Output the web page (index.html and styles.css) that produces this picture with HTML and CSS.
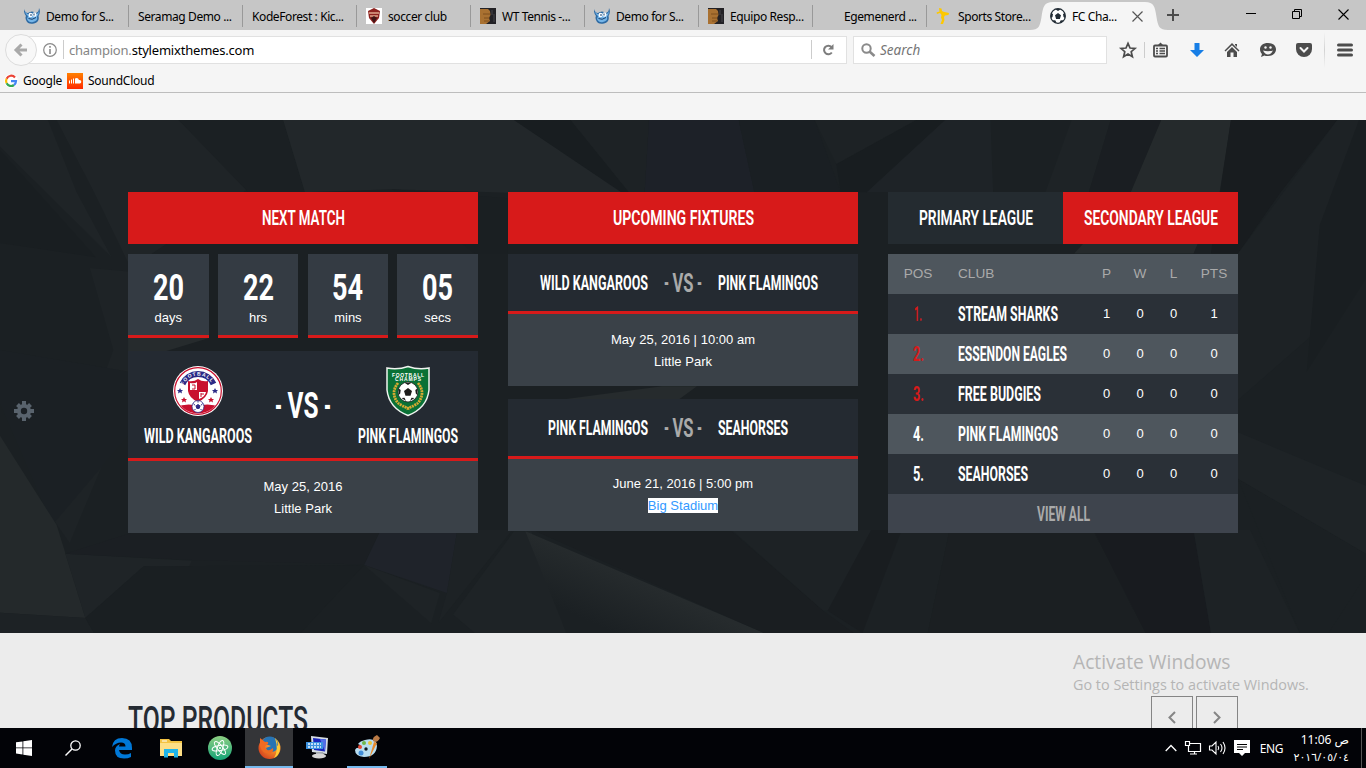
FILE: index.html
```html
<!DOCTYPE html>
<html lang="en">
<head>
<meta charset="utf-8">
<title>FC Champion</title>
<link rel="stylesheet" href="styles.css">
</head>
<body>
<svg class="defs" width="0" height="0">
  <defs>
    <symbol id="imp" viewBox="0 0 16 16"><path d="M0 1Q1 5 4 5Q8 2 12 5Q15 4 15 0Q17 4 14.500 8Q16 14 10 15.500Q4 17 2 12Q1 9 2 8Q-.5 5 0 1Z" fill="#2d6aa3"/><path d="M1 3Q2 6 4.500 6.500Q8 4 12 6.500Q14.500 5 15 3Q15 6 13 8.500Q14 13 9 14Q5 15 3 11L4 8Q1 6 1 3Z" fill="#75b5e8"/><ellipse cx="6.500" cy="7" rx="2" ry="2.200" fill="#fff"/><ellipse cx="10.500" cy="6.500" rx="2" ry="2.200" fill="#fff"/><path d="M7 6v2M10 5.500v2M4.500 10.500Q8 12.500 12 9.500" stroke="#173d68" fill="none"/></symbol>
    <symbol id="face" viewBox="0 0 16 16"><path fill="#222125" d="M0 0h16v16H0z"/><path fill="#a97131" d="M0 1h8l2 2 .5 4L9 10l1 3-4 3H0z"/><path d="M3 6h7M4 10h6M4 13h5" stroke="#744819" stroke-width=".8"/><path d="M12 2v5M14 6v8" stroke="#45454a"/></symbol>
    <symbol id="ball" viewBox="0 0 16 16"><circle cx="8" cy="8" r="7.300" fill="#fff" stroke="#222c35" stroke-width="1.300"/><path fill="#222c35" d="M8 5l3 2.200L9.900 11H6.100L5 7.200zM5 1h6L8 3zM1 5l2 1-.5 3L.8 10zM15 5l-2 1 .5 3 1.700 1zM3 12l2.500.5L6.500 15 4 14.500zM13 12l-2.500.5L9.500 15l2.500-.5z"/></symbol>
  </defs>
</svg>

<div class="tabs">
  <div class="tab"><svg width="16" height="16"><use href="#imp"/></svg><span>Demo for S...</span></div>
  <div class="tab"><span>Seramag Demo ...</span></div>
  <div class="tab"><span>KodeForest : Kic...</span></div>
  <div class="tab"><svg width="16" height="16"><path fill="#fff" d="M0 0h16v16H0z"/><path d="M2 3L8 0l6 3-1 7-5 6-5-6z" fill="#8d2320"/><path d="M3 5h10M4 8h8" stroke="#dea78a" stroke-width="1.500"/><path d="M5 10l3-2 3 2-3 5z" fill="#401515"/></svg><span>soccer club</span></div>
  <div class="tab"><svg width="16" height="16"><use href="#face"/></svg><span>WT Tennis -...</span></div>
  <div class="tab"><svg width="16" height="16"><use href="#imp"/></svg><span>Demo for S...</span></div>
  <div class="tab"><svg width="16" height="16"><use href="#face"/></svg><span>Equipo Resp...</span></div>
  <div class="tab"><svg width="16" height="16"></svg><span>Egemenerd ...</span></div>
  <div class="tab last"><svg width="16" height="16"><path d="M3 0l2.500.5L6 3l1.500.8L13 5l-.5 2-3.500.5L8 9l.5 3L7 16H4.500L6 12l-1-2.500L5.500 7 4 5 1 6 .5 4.500 3.500 3.500z" fill="#fdc800"/></svg><span>Sports Store...</span></div>
  <div class="tab active">
    <svg class="tab-shape" width="138" height="28"><path d="M0 28C9 28 10 24 11.500 15C13 5 14 0 23 0H115C124 0 125 5 126.500 15C128 24 129 28 138 28Z" fill="#f5f5f5"/></svg>
    <svg width="16" height="16"><use href="#ball"/></svg><span>FC Cha...</span>
    <svg class="tab-close" width="11" height="11"><path d="M.5 .5l10 10M10.500 .5l-10 10" stroke="#555" stroke-width="1.200"/></svg>
  </div>
  <svg class="newtab" width="12" height="12"><path d="M6 0v12M0 6h12" stroke="#4c4c4c" stroke-width="2"/></svg>
  <div class="winctl">
    <svg width="10" height="10"><path d="M0 4.500h10" stroke="#000"/></svg>
    <svg width="10" height="10"><path d="M.5 2.500h7v7h-7zM2.500 2.500v-2h7v7h-2" fill="none" stroke="#000"/></svg>
    <svg width="11" height="11"><path d="M.5 .5l10 10M10.500 .5l-10 10" stroke="#000" stroke-width="1.100"/></svg>
  </div>
</div>

<div class="nav">
  <div class="back"><svg width="14" height="14"><path d="M13 7H2M7.500 1.500L2 7l5.500 5.500" fill="none" stroke="#a9a9a9" stroke-width="3"/></svg></div>
  <div class="url">
    <svg width="14" height="14"><circle cx="7" cy="7" r="6.300" fill="none" stroke="#8a8a8a" stroke-width="1.200"/><path d="M7 3v1.800M7 6v5" stroke="#8a8a8a" stroke-width="1.600"/></svg>
    <i class="sep"></i>
    <span class="addr">champion.<b>stylemixthemes.com</b></span>
    <i class="sep right"></i>
    <svg width="12" height="12"><path d="M9.500 3A4.300 4.300 0 1 0 9.800 8.500" fill="none" stroke="#7d7d7d" stroke-width="2"/><path d="M11.500 0v5.500H6z" fill="#7d7d7d"/></svg>
  </div>
  <div class="search"><svg width="14" height="14"><circle cx="5.500" cy="5.500" r="4.200" fill="none" stroke="#8a8a8a" stroke-width="2"/><path d="M8.500 8.500l5 4.500" stroke="#8a8a8a" stroke-width="2.600"/></svg><span>Search</span></div>
  <div class="tools">
    <svg width="16" height="16"><path d="M8 1.300l2 4.700 5 .4-3.800 3.300 1.200 5L8 12l-4.400 2.700 1.200-5L1 6.400 6 6z" fill="none" stroke="#4c4c4c" stroke-width="1.700"/></svg>
    <i class="tool-sep"></i>
    <svg width="15" height="16"><rect x="1" y="3.500" width="13" height="11" rx="1" fill="none" stroke="#4c4c4c" stroke-width="1.800"/><path d="M4.500 3.500L7.500 .5l3 3z" fill="#4c4c4c"/><path d="M3 6.500h2M6.500 6.500H12M3 9h2M6.500 9H12M3 11.500h2M6.500 11.500H12" stroke="#4c4c4c" stroke-width="1.300"/></svg>
    <svg class="dl" width="14" height="16"><path d="M4.500 1h5v7H14l-7 7-7-7h4.500z" fill="#177ee6"/></svg>
    <svg width="16" height="16"><path d="M8 1l7.500 7.500-1 1L8 3.200 1.500 9.500l-1-1zM11 2h2v3l-2-2zM8 5l5 5v5h-3.500v-4.500h-3V15H3v-5z" fill="#4c4c4c"/></svg>
    <svg width="16" height="16"><path d="M8 1c5 0 8 2.500 8 6.300S13 14 8 14c-1.500 0-3-.3-3.500-.6L1 15l1-3C.7 11 0 9 0 7.300 0 3.500 3 1 8 1z" fill="#4c4c4c"/><circle cx="5.500" cy="5.500" r="1.200" fill="#f5f5f5"/><circle cx="10.500" cy="5.500" r="1.200" fill="#f5f5f5"/><path d="M3 8.500Q8 10 13 8.500Q11 12.500 8 12.500T3 8.500Z" fill="#f5f5f5"/></svg>
    <svg width="16" height="16"><path d="M2 1h12q2 0 2 2v4a8 8 0 0 1-16 0V3q0-2 2-2z" fill="#4c4c4c"/><path d="M4.500 6L8 9.500 11.500 6" fill="none" stroke="#f5f5f5" stroke-width="2" stroke-linecap="round"/></svg>
    <i class="menu-sep"></i>
    <svg width="16" height="14"><path d="M1.500 2h13M1.500 7h13M1.500 12h13" stroke="#4c4c4c" stroke-width="3" stroke-linecap="round"/></svg>
  </div>
</div>

<div class="bookmarks">
  <svg width="14" height="14" viewBox="0 0 14 14"><circle cx="7" cy="7" r="7" fill="#fff"/><g fill="none" stroke-width="2.200"><path d="M11 3.500A5 5 0 0 0 2.600 4.700" stroke="#ea4335"/><path d="M2.600 4.700A5 5 0 0 0 2.600 9.300" stroke="#fbbc05"/><path d="M2.600 9.300A5 5 0 0 0 10 11" stroke="#34a853"/><path d="M10 11A5 5 0 0 0 12 7.200H7" stroke="#4285f4"/></g></svg>
  <span>Google</span>
  <svg width="16" height="16"><defs><linearGradient id="sc" x2="0" y2="1"><stop stop-color="#ff8000"/><stop offset="1" stop-color="#ff2a00"/></linearGradient></defs><path fill="url(#sc)" d="M0 0h16v16H0z"/><path d="M2.500 7.500v3M4.500 6.500v4M6.500 5.500v5" stroke="#fff"/><path d="M8 10.500V5.500q3-1.500 4 1.500 2.300-.3 2.300 1.700T12.500 10.500z" fill="#fff"/></svg>
  <span>SoundCloud</span>
</div>

<main>
<section class="hero">
  <svg class="facets" viewBox="0 56 1568 1436" preserveAspectRatio="none">
    <defs><linearGradient id="ray" gradientUnits="userSpaceOnUse" x1="650" y1="1430" x2="740" y2="1350"><stop stop-color="#1b2023"/><stop offset="1" stop-color="#262b2d"/></linearGradient></defs>
    <path d="M0 56H55L88 258 128 440 0 130Z" fill="#1f2427"/>
    <path d="M0 140L110 440 0 400Z" fill="#191e21"/>
    <path d="M65 56H205L290 240 150 470 108 258Z" fill="#1f2427"/>
    <path d="M205 56H325L350 258H285Z" fill="#1b2023"/>
    <path d="M325 56H590L715 258 590 260 450 250 350 258Z" fill="#22272a"/>
    <path d="M450 250L583 275V430H545Z" fill="#1a1f22"/>
    <path d="M590 56H655L722 258H713Z" fill="#181d20"/>
    <path d="M655 56H745L740 258H722Z" fill="#1d2225"/>
    <path d="M745 56H848L866 258H740Z" fill="#1d2128"/>
    <path d="M848 56H935L965 258H866Z" fill="#1a1f23"/>
    <path d="M935 56H1052L960 180Z" fill="#1d2225"/>
    <path d="M1052 56H1085L995 258H965L960 180Z" fill="#181d20"/>
    <path d="M1085 56H1137L1140 258H995Z" fill="#1e2327"/>
    <path d="M1230 56H1275L1250 258H1200Z" fill="#1e2326"/>
    <path d="M1275 56H1333L1298 258H1250Z" fill="#1a1e22"/>
    <path d="M1333 56H1413L1400 258 1370 430H1233L1298 258Z" fill="#252a2c"/>
    <path d="M1413 56H1535L1470 258 1421 430H1390Z" fill="#181c1f"/>
    <path d="M1535 56H1568V200L1510 650 1421 840V430Z" fill="#1d2225"/>
    <path d="M1560 56L1568 56V500L1500 760 1515 350Z" fill="#191e21"/>
    <path d="M103 470L147 480V850L80 1240 60 1170 130 700Z" fill="#1e2326"/>
    <path d="M0 700L147 760V940L60 1190 0 850Z" fill="#1b2024"/>
    <path d="M0 940L65 1190 98 1450 0 1435Z" fill="#24292b"/>
    <path d="M0 1435L98 1450 108 1492H0Z" fill="#1d2225"/>
    <path d="M75 1270L220 1290 215 1318 165 1305 98 1450Z" fill="#1f2427"/>
    <path d="M75 1270L150 1212H435L418 1300 220 1288Z" fill="#1b1f23"/>
    <path d="M165 1305L418 1302 345 1492H108L98 1450Z" fill="#1a1f22"/>
    <path d="M437 1204H525L513 1380 418 1302Z" fill="#1f232a"/>
    <path d="M525 1204H588L503 1465 513 1380Z" fill="#1d2225"/>
    <path d="M418 1302L505 1380 495 1465Z" fill="#1e2326"/>
    <path d="M590 1207H610L650 1492H545L520 1440Z" fill="#1e2326"/>
    <path d="M603 1207L877 1492H650Z" fill="url(#ray)"/>
    <path d="M615 1207H840L945 1430 980 1492H877Z" fill="#1a1e21"/>
    <path d="M840 1204H1000L965 1430 945 1430Z" fill="#1d2225"/>
    <path d="M1000 1204H1035L990 1492 950 1430Z" fill="#191d20"/>
    <path d="M1035 1204H1090L1065 1492H990Z" fill="#1c2124"/>
    <path d="M1090 1204H1255L1315 1492H1065Z" fill="#1b1f22"/>
    <path d="M1255 1204H1370L1390 1492H1315Z" fill="#181b1f"/>
    <path d="M1370 1204H1435L1492 1492H1390Z" fill="#1d2225"/>
    <path d="M1421 1060L1568 1270V1330L1525 1492H1492Z" fill="#1b2023"/>
    <path d="M1421 930L1568 1080V1270L1421 1060Z" fill="#1e2326"/>
    <path d="M650 837L760 801H800L780 837ZM147 600L240 666 190 703H147Z" fill="#262b2d"/>
  </svg>
  <svg class="gear" width="20" height="20" viewBox="-10 -10 20 20"><g stroke="#59636d" stroke-width="4"><path d="M0-10V10M-10 0H10M-6.500-6.500L6.500 6.500M6.500-6.500L-6.500 6.500"/></g><circle r="7" fill="#59636d"/><circle r="3.200" fill="#1b2025"/></svg>

  <div class="columns">
    <div class="col">
      <h2 class="bar"><svg class="cond lg" width="83" height="22"><text y="18.200" textLength="83" lengthAdjust="spacingAndGlyphs">NEXT MATCH</text></svg></h2>
      <div class="countdown">
        <div><svg class="cond xl" width="31" height="34"><text y="30" textLength="31" lengthAdjust="spacingAndGlyphs">20</text></svg><span>days</span></div>
        <div><svg class="cond xl" width="31" height="34"><text y="30" textLength="31" lengthAdjust="spacingAndGlyphs">22</text></svg><span>hrs</span></div>
        <div><svg class="cond xl" width="31" height="34"><text y="30" textLength="31" lengthAdjust="spacingAndGlyphs">54</text></svg><span>mins</span></div>
        <div><svg class="cond xl" width="31" height="34"><text y="30" textLength="31" lengthAdjust="spacingAndGlyphs">05</text></svg><span>secs</span></div>
      </div>
      <div class="versus">
        <div class="team">
          <svg width="50" height="50" viewBox="0 0 50 50"><defs><clipPath id="rc"><circle cx="25" cy="25" r="22.500"/></clipPath><path id="arc" d="M10.500 19.500A15.500 15.500 0 0 1 39.500 19.500"/></defs><circle cx="25" cy="25" r="25" fill="#fff"/><circle cx="25" cy="25" r="23.300" fill="#fff" stroke="#c8102e" stroke-width="1.200"/><path clip-path="url(#rc)" d="M0 42Q14 36 25 40Q36 36 50 42V50H0Z" fill="#c8102e"/><path d="M9.500 18A17 17 0 0 1 40.500 18" fill="none" stroke="#2b2a86" stroke-width="6"/><text class="crest-label"><textPath href="#arc" textLength="34">FOOTBALL</textPath></text><path d="M15 15Q21 16 25 13Q29 16 35 15V25Q34 32 25 36Q16 32 15 25Z" fill="#c8102e"/><path d="M17 17q5 1 7-1v8h-7zM26 26h7q-1 5-7 7z" fill="#fff"/><path d="M19 19h3v4h-3M28 27v4M28 28h3" fill="none" stroke="#c8102e"/><path d="M7 22l1 2h2l-1.500 1.500.5 2L7 26.300 5 27.500l.5-2L4 24h2zM42 22l1 2h2l-1.500 1.500.5 2-2-1.200-2 1.200.5-2L39 24h2z" fill="#2b2a86"/><path d="M11 31l1 2h2l-1.500 1.500.5 2-2-1.200L9 36.500l.5-2L8 33h2zM38 31l1 2h2l-1.500 1.500.5 2-2-1.200-2 1.200.5-2L35 33h2z" fill="#c8102e"/><circle cx="25" cy="40.500" r="6" fill="#fff" stroke="#2b2a86" stroke-width=".8"/><path d="M25 38.500l2 1.500-.8 2.400h-2.400L23 40zM20.500 37.500l1.500 2M29.500 37.500l-1.500 2M25 35v1.500M21.500 44l1-1M28.500 44l-1-1" fill="#2b2a86" stroke="#2b2a86"/></svg>
          <svg class="cond md" width="108" height="20"><text y="17" textLength="108" lengthAdjust="spacingAndGlyphs">WILD KANGAROOS</text></svg>
        </div>
        <svg class="cond vs" width="56" height="34"><text y="30"><tspan x="0" textLength="7" lengthAdjust="spacingAndGlyphs">-</tspan><tspan x="12.500" textLength="31" lengthAdjust="spacingAndGlyphs">VS</tspan><tspan x="49" textLength="7" lengthAdjust="spacingAndGlyphs">-</tspan></text></svg>
        <div class="team">
          <svg width="44" height="50" viewBox="0 0 44 50"><path d="M1 2Q12 4 22 .5Q32 4 43 2Q43 10 43 24Q41 42 22 49.500Q3 42 1 24Q1 10 1 2Z" fill="#0a7136" stroke="#f0f4f0" stroke-width="1.500"/><text class="crest-label" x="6" y="10.500" textLength="32">FOOTBALL</text><text class="crest-label" x="9" y="15" textLength="26">CHAMPS</text><path d="M12 17Q4 27 12 37Q16 40 24 43M32 17Q40 27 32 37Q28 40 20 43" fill="none" stroke="#d8aa32" stroke-width="2.800" stroke-dasharray="2 .7"/><circle cx="22" cy="26" r="10" fill="#fff" stroke="#222" stroke-width=".8"/><path d="M22 22l4 3-1.500 4.700h-5L18 25zM18.500 16.700h7L22 19zM12.700 22.500l2 1.500-.5 3.500-1.500 1.500zM31.300 22.500l-2 1.500.5 3.500 1.500 1.500zM15.500 32l3-.2 1.500 3.200zM28.500 32l-3-.2-1.500 3.200z" fill="#1e1d1b"/></svg>
          <svg class="cond md" width="100" height="20"><text y="17" textLength="100" lengthAdjust="spacingAndGlyphs">PINK FLAMINGOS</text></svg>
        </div>
      </div>
      <p class="when low">May 25, 2016<br>Little Park</p>
    </div>

    <div class="col">
      <h2 class="bar"><svg class="cond lg" width="141" height="22"><text y="18.200" textLength="141" lengthAdjust="spacingAndGlyphs">UPCOMING FIXTURES</text></svg></h2>
      <div class="fixture">
        <svg class="cond md" width="108" height="20"><text y="16.500" textLength="108" lengthAdjust="spacingAndGlyphs">WILD KANGAROOS</text></svg>
        <svg class="cond svs" width="38" height="24"><text y="21"><tspan x="0" textLength="5" lengthAdjust="spacingAndGlyphs">-</tspan><tspan x="8.500" textLength="21" lengthAdjust="spacingAndGlyphs">VS</tspan><tspan x="33" textLength="5" lengthAdjust="spacingAndGlyphs">-</tspan></text></svg>
        <svg class="cond md" width="100" height="20"><text y="16.500" textLength="100" lengthAdjust="spacingAndGlyphs">PINK FLAMINGOS</text></svg>
      </div>
      <p class="when low">May 25, 2016 | 10:00 am<br>Little Park</p>
      <div class="fixture second">
        <svg class="cond md" width="100" height="20"><text y="16.500" textLength="100" lengthAdjust="spacingAndGlyphs">PINK FLAMINGOS</text></svg>
        <svg class="cond svs" width="38" height="24"><text y="20.500"><tspan x="0" textLength="5" lengthAdjust="spacingAndGlyphs">-</tspan><tspan x="8.500" textLength="21" lengthAdjust="spacingAndGlyphs">VS</tspan><tspan x="33" textLength="5" lengthAdjust="spacingAndGlyphs">-</tspan></text></svg>
        <svg class="cond md" width="70" height="20"><text y="16.500" textLength="70" lengthAdjust="spacingAndGlyphs">SEAHORSES</text></svg>
      </div>
      <p class="when">June 21, 2016 | 5:00 pm<br><mark>Big Stadium</mark></p>
    </div>

    <div class="col">
      <div class="leagues">
        <h2 class="bar dark"><svg class="cond lg" width="114" height="22"><text y="18.200" textLength="114" lengthAdjust="spacingAndGlyphs">PRIMARY LEAGUE</text></svg></h2>
        <h2 class="bar"><svg class="cond lg" width="134" height="22"><text y="18.200" textLength="134" lengthAdjust="spacingAndGlyphs">SECONDARY LEAGUE</text></svg></h2>
      </div>
      <div class="row head"><span>POS</span><span class="club">CLUB</span><span>P</span><span>W</span><span>L</span><span>PTS</span></div>
      <div class="row"><span class="red"><svg class="cond md" width="8" height="20"><text y="17" textLength="8" lengthAdjust="spacingAndGlyphs">1.</text></svg></span><span class="club"><svg class="cond md" width="100" height="20"><text y="17" textLength="100" lengthAdjust="spacingAndGlyphs">STREAM SHARKS</text></svg></span><span>1</span><span>0</span><span>0</span><span>1</span></div>
      <div class="row alt"><span class="red"><svg class="cond md" width="11" height="20"><text y="17" textLength="11" lengthAdjust="spacingAndGlyphs">2.</text></svg></span><span class="club"><svg class="cond md" width="109" height="20"><text y="17" textLength="109" lengthAdjust="spacingAndGlyphs">ESSENDON EAGLES</text></svg></span><span>0</span><span>0</span><span>0</span><span>0</span></div>
      <div class="row"><span class="red"><svg class="cond md" width="11" height="20"><text y="17" textLength="11" lengthAdjust="spacingAndGlyphs">3.</text></svg></span><span class="club"><svg class="cond md" width="83" height="20"><text y="17" textLength="83" lengthAdjust="spacingAndGlyphs">FREE BUDGIES</text></svg></span><span>0</span><span>0</span><span>0</span><span>0</span></div>
      <div class="row alt"><span><svg class="cond md" width="11" height="20"><text y="17" textLength="11" lengthAdjust="spacingAndGlyphs">4.</text></svg></span><span class="club"><svg class="cond md" width="100" height="20"><text y="17" textLength="100" lengthAdjust="spacingAndGlyphs">PINK FLAMINGOS</text></svg></span><span>0</span><span>0</span><span>0</span><span>0</span></div>
      <div class="row"><span><svg class="cond md" width="11" height="20"><text y="17" textLength="11" lengthAdjust="spacingAndGlyphs">5.</text></svg></span><span class="club"><svg class="cond md" width="70" height="20"><text y="17" textLength="70" lengthAdjust="spacingAndGlyphs">SEAHORSES</text></svg></span><span>0</span><span>0</span><span>0</span><span>0</span></div>
      <div class="viewall"><svg class="cond md" width="53" height="20"><text y="16.500" textLength="53" lengthAdjust="spacingAndGlyphs">VIEW ALL</text></svg></div>
    </div>
  </div>
</section>

<section class="products">
  <svg class="cond title" width="180" height="30"><text y="27" textLength="180" lengthAdjust="spacingAndGlyphs">TOP PRODUCTS</text></svg>
  <div class="arrows">
    <div><svg width="8" height="13"><path d="M7 1L1.500 6.500 7 12" fill="none" stroke="#858585" stroke-width="2"/></svg></div>
    <div><svg width="8" height="13"><path d="M1 1l5.500 5.500L1 12" fill="none" stroke="#858585" stroke-width="2"/></svg></div>
  </div>
  <div class="watermark"><strong>Activate Windows</strong><span>Go to Settings to activate Windows.</span></div>
</section>
</main>

<div class="taskbar">
  <div class="app"><svg width="16" height="16"><path d="M0 2.300l6.500-.9v6.100H0zM7.300 1.300L16 0v7.500H7.300zM0 8.300h6.500v6.100L0 13.500zM7.300 8.300H16V16l-8.700-1.300z" fill="#fff"/></svg></div>
  <div class="app"><svg width="16" height="16"><circle cx="10.500" cy="5.500" r="4.700" fill="none" stroke="#fff" stroke-width="1.300"/><path d="M7 9L.5 15.500" stroke="#fff" stroke-width="1.500"/></svg></div>
  <div class="app"><svg width="20" height="22" viewBox="0 0 20 22"><path d="M0 10Q1 1 10 1Q20 1 20 11V13H7Q8 17.500 13 17.500Q16.500 17.500 19 16V20Q16 21.500 12 21.500Q3 21.500 3 13.500Q3 9 8 7Q7 8.500 7 9.500H13.500Q13.500 5.500 9 5.500Q4 5.500 0 10Z" fill="#0078d7"/></svg></div>
  <div class="app"><svg width="22" height="19"><path d="M0 0h9l2 2h11v15H0z" fill="#f3c343"/><path d="M0 4h22v13H0z" fill="#fddf86"/><path d="M2 2h5" stroke="#fff"/><path d="M4 10h14v8.500h-4V14H8v4.500H4z" fill="#20b5e9"/></svg></div>
  <div class="app"><svg width="24" height="24" viewBox="-12 -12 24 24"><defs><linearGradient id="at" x2="0" y2="1"><stop stop-color="#8ed083"/><stop offset="1" stop-color="#13a377"/></linearGradient></defs><circle r="12" fill="url(#at)"/><g fill="none" stroke="#fff"><ellipse rx="2.600" ry="8" transform="rotate(20)"/><ellipse rx="2.600" ry="8" transform="rotate(80)"/><ellipse rx="2.600" ry="8" transform="rotate(-40)"/></g><circle r="1" fill="#fff"/></svg></div>
  <div class="app current"><svg width="23" height="23" viewBox="0 0 23 23"><defs><radialGradient id="fx" cx=".75" cy=".25" r=".9"><stop stop-color="#ffe34a"/><stop offset=".4" stop-color="#f6902a"/><stop offset="1" stop-color="#d33d1e"/></radialGradient></defs><circle cx="11.500" cy="12" r="11" fill="url(#fx)"/><path d="M4 5Q8-.5 14 .8Q20 2.500 20 9Q20 15 14 16Q9 16 8 12L13 10 7 8 4 9Z" fill="#2674b5"/><path d="M2 2L7 6Q11 5 10 8L7 10Q7 15 12 14L15 12Q16 16 12 17.500Q4 18 2 10Z" fill="#ef6b22"/><path d="M17 2Q20 5 19 10Q22 7 22 13Q21 20 16 22Q21 14 17 2" fill="#ffcb35"/></svg></div>
  <div class="app"><svg width="24" height="24"><path d="M5 0l17 2-1 16-15-2z" fill="#d6dde3"/><path d="M7 2l13 1.500-1 12L8 14z" fill="#1825bd"/><path d="M14 3l6 .5-1 12z" fill="#526ee8"/><path d="M10 16h7l1 3h-8z" fill="#a6acb1"/><ellipse cx="13" cy="20" rx="7" ry="2.500" fill="#d6d6d6"/><path d="M0 6h17v7H0z" fill="#3b91df"/><path d="M2 8h13M2 11h13" stroke="#eaf7ff" stroke-width="1.500" stroke-dasharray="2 1"/></svg></div>
  <div class="app running"><svg width="25" height="24"><path d="M10 5Q21 2 22 11Q21 22 9 22Q0 21 0 15Q1 12 5 13Q7 10 3 9Q5 6 10 5Z" fill="#b9def1"/><circle cx="5" cy="12" r="2" fill="#e54a35"/><circle cx="9" cy="8" r="2" fill="#70b74c"/><circle cx="15" cy="8" r="2" fill="#edc337"/><circle cx="6" cy="18" r="2.500" fill="#438ed8"/><circle cx="11" cy="14" r="1.700" fill="#101820"/><path d="M19 7l3 1-8 16z" fill="#e88a2c"/><path d="M18 6Q17 2 22 0L25 3Q23 7 20 7z" fill="#b97a46"/></svg></div>
  <div class="tray">
    <svg width="12" height="8"><path d="M.7 7L6 1.500 11.300 7" fill="none" stroke="#fff" stroke-width="1.300"/></svg>
    <svg width="16" height="14"><path d="M4 2.500h11.500v8H3.500V5M.5 .5h4v4h-4zM9.500 10.500v3M5 13h7" fill="none" stroke="#fff" stroke-width="1.200"/></svg>
    <svg width="17" height="14"><path d="M.5 5h2.500l4-4v12l-4-4H.5zM9 5q1.500 2 0 4M11.500 3q3 4 0 8M14 1q4 6 0 12" fill="none" stroke="#fff" stroke-width="1.100"/></svg>
    <svg width="16" height="16"><path d="M0 0h16v13h-5l-3 3-3-3H0z" fill="#fff"/><path d="M3 4.500h10M3 7h10M3 9.500h6" stroke="#000"/></svg>
    <span class="lang">ENG</span>
    <div class="clock"><span>11:06 ص</span><span class="date">٢٠١٦/٠٥/٠٤</span></div>
  </div>
</div>
</body>
</html>
```
FILE: styles.css
```css
* { box-sizing: border-box; }
body { margin: 0; width: 1366px; height: 768px; overflow: hidden; display: flex; flex-direction: column; background: #f5f5f5; color: #000; font-family: "Noto Sans", "Open Sans", sans-serif; font-size: 12px; }
svg { display: block; flex: none; overflow: visible; }
.defs { position: absolute; }
h2, p { margin: 0; }

/* browser chrome */
.tabs { flex: none; height: 30px; background: #c6c6c6; display: flex; align-items: center; padding-left: 14px; }
.tab { width: 114px; height: 30px; padding: 2px 0 0 10px; display: flex; align-items: center; gap: 6px; position: relative; flex: none; white-space: nowrap; font-size: 12px; letter-spacing: -.4px; }
.tab::after { content: ""; position: absolute; right: -1px; top: 5px; width: 1px; height: 22px; background: #999; }
.tab.last::after, .tab.active::after { display: none; }
.tab.active { width: 126px; }
.tab-shape { position: absolute; left: -10px; top: 2px; }
.tab.active > :not(.tab-shape) { position: relative; }
.tab-close { margin-left: 9px; }
.newtab { margin-left: 1px; }
.winctl { margin: 0 17px 2px auto; display: flex; gap: 36px; align-items: center; }
.nav { flex: none; height: 39px; display: flex; align-items: center; padding-left: 5px; }
.back { width: 32px; height: 32px; border: 1px solid #dcdcdc; border-radius: 50%; background: #f8f8f8; display: grid; place-items: center; z-index: 1; flex: none; }
.url { width: 827px; height: 28px; margin-left: -17px; padding: 0 12px 0 22px; display: flex; align-items: center; background: #fff; border: 1px solid #e1e1e1; flex: none; }
.sep { width: 1px; height: 19px; background: #ccc; margin: 0 5px 0 6px; }
.sep.right { margin: 0 10px 0 auto; }
.addr { color: #858585; font-size: 13px; letter-spacing: -.2px; }
.addr b { color: #000; font-weight: 400; }
.search { width: 254px; height: 28px; margin-left: 6px; padding-left: 7px; display: flex; align-items: center; gap: 5px; background: #fff; border: 1px solid #e1e1e1; font-size: 13.500px; font-style: italic; color: #757575; flex: none; }
.tools { display: flex; align-items: center; margin-left: 13px; gap: 20px; }
.tool-sep { width: 1px; height: 16px; background: #ccc; margin: 0 -12px; }
.dl { margin-left: 2px; }
.menu-sep { width: 1px; height: 36px; margin: 0 -8px; background: linear-gradient(transparent, #d2d2d2, transparent); }
.bookmarks { flex: none; height: 24px; padding-left: 4px; display: flex; align-items: center; gap: 5px; border-bottom: 1px solid #bdbdbd; letter-spacing: -.25px; }
main { flex: 1; padding-top: 27px; min-height: 0; overflow: hidden; }

/* squeezed display lettering */
.cond { font-family: Roboto, sans-serif; font-weight: 700; fill: currentColor; }
.lg { font-size: 21px; font-weight: 600; }
.md { font-size: 19.500px; }
.xl, .vs { font-size: 36.500px; }
.svs { font-size: 25px; color: #aaa; }
.title { font-size: 36px; font-weight: 500; color: #252b33; }

/* matches */
.hero { position: relative; height: 513px; background: #1b2023; color: #fff; padding: 72px 128px 0; font-family: "Liberation Sans", Arial, sans-serif; font-size: 13px; }
.facets { position: absolute; inset: 0; width: 100%; height: 100%; }
.gear { position: absolute; left: 14px; top: 281px; }
.columns { position: relative; display: grid; grid-template-columns: repeat(3, 350px); gap: 30px; }
.bar { height: 52px; margin-bottom: 10px; display: grid; place-items: center; background: #d71a1a; }
.bar.dark { background: #242b30; }
.countdown { display: grid; grid-template-columns: repeat(4, 1fr); gap: 9.300px; margin-bottom: 13px; }
.countdown div { height: 84px; padding-top: 16px; background: #343b43; border-bottom: 3px solid #d71a1a; display: flex; flex-direction: column; align-items: center; gap: 6px; }
.versus { height: 110px; padding: 15px 16px 0; display: flex; justify-content: space-between; align-items: flex-start; background: #242a32; border-bottom: 3px solid #d71a1a; }
.versus > .vs { margin: 22px 0 0 -4px; }
.team { display: flex; flex-direction: column; align-items: center; gap: 10px; }
.versus .team:last-child { margin-right: 4px; }
.crest-label { font: 700 5px "Liberation Sans", sans-serif; fill: #fff; }
.when { height: 72px; padding-top: 14px; line-height: 22px; text-align: center; background: #3a4148; letter-spacing: .02px; }
.when.low { padding-top: 15px; }
.when mark { background: #fff; color: #3399ff; }
.fixture { height: 60px; display: grid; grid-template-columns: 140px 38px 140px; column-gap: 16px; align-items: center; background: #242a31; border-bottom: 3px solid #d71a1a; }
.fixture > :first-child { justify-self: end; }
.fixture.second { margin-top: 13px; }
.leagues { display: grid; grid-template-columns: 1fr 1fr; }
.row { height: 40px; padding-bottom: 1px; display: grid; grid-template-columns: 60px 142px 33px 34px 33px 48px; align-items: center; justify-items: center; background: #2a3037; }
.row .club { justify-self: start; margin-left: 10px; }
.row.alt, .row.head { background: #4e565d; }
.row.head { color: #aaa; font-size: 13.600px; padding-bottom: 2px; }
.red { color: #d71a1a; }
.viewall { height: 39px; display: grid; place-items: center; background: #3e444d; color: #aaa; }

/* products */
.products { position: relative; height: 95px; padding: 63px 128px 0; display: flex; justify-content: space-between; background: #ececec; }
.products > .title { margin-top: 9px; }
.arrows { display: flex; gap: 3px; }
.arrows div { width: 42px; height: 42px; border: 1px solid #858585; display: grid; place-items: center; }
.watermark { position: absolute; left: 1073px; top: 15px; color: #b5b5b5; display: flex; flex-direction: column; white-space: nowrap; font-family: "Open Sans", sans-serif; }
.watermark strong { font-size: 19.200px; line-height: 28px; font-weight: 400; }
.watermark span { font-size: 14.400px; line-height: 18px; }

/* taskbar */
.taskbar { flex: none; height: 40px; background: #020307; color: #fff; display: flex; }
.app { width: 48px; height: 40px; margin-right: 1px; display: grid; place-items: center; }
.current { background: #343538; border-bottom: 2px solid #76b9ed; }
.running { width: 40px; margin-left: 4px; border-bottom: 2px solid #76b9ed; }
.tray { margin-left: auto; display: flex; align-items: center; gap: 8px; padding-right: 12px; border-right: 1px solid #555; margin-right: 4px; }
.lang { letter-spacing: -.4px; margin-left: 2px; }
.clock { width: 52px; display: flex; flex-direction: column; align-items: flex-end; font-family: "Noto Sans", "DejaVu Sans", sans-serif; font-size: 12px; line-height: 17px; letter-spacing: -.6px; margin-left: 6px; white-space: nowrap; }
.date { font-size: 11px; letter-spacing: -1px; }
```
